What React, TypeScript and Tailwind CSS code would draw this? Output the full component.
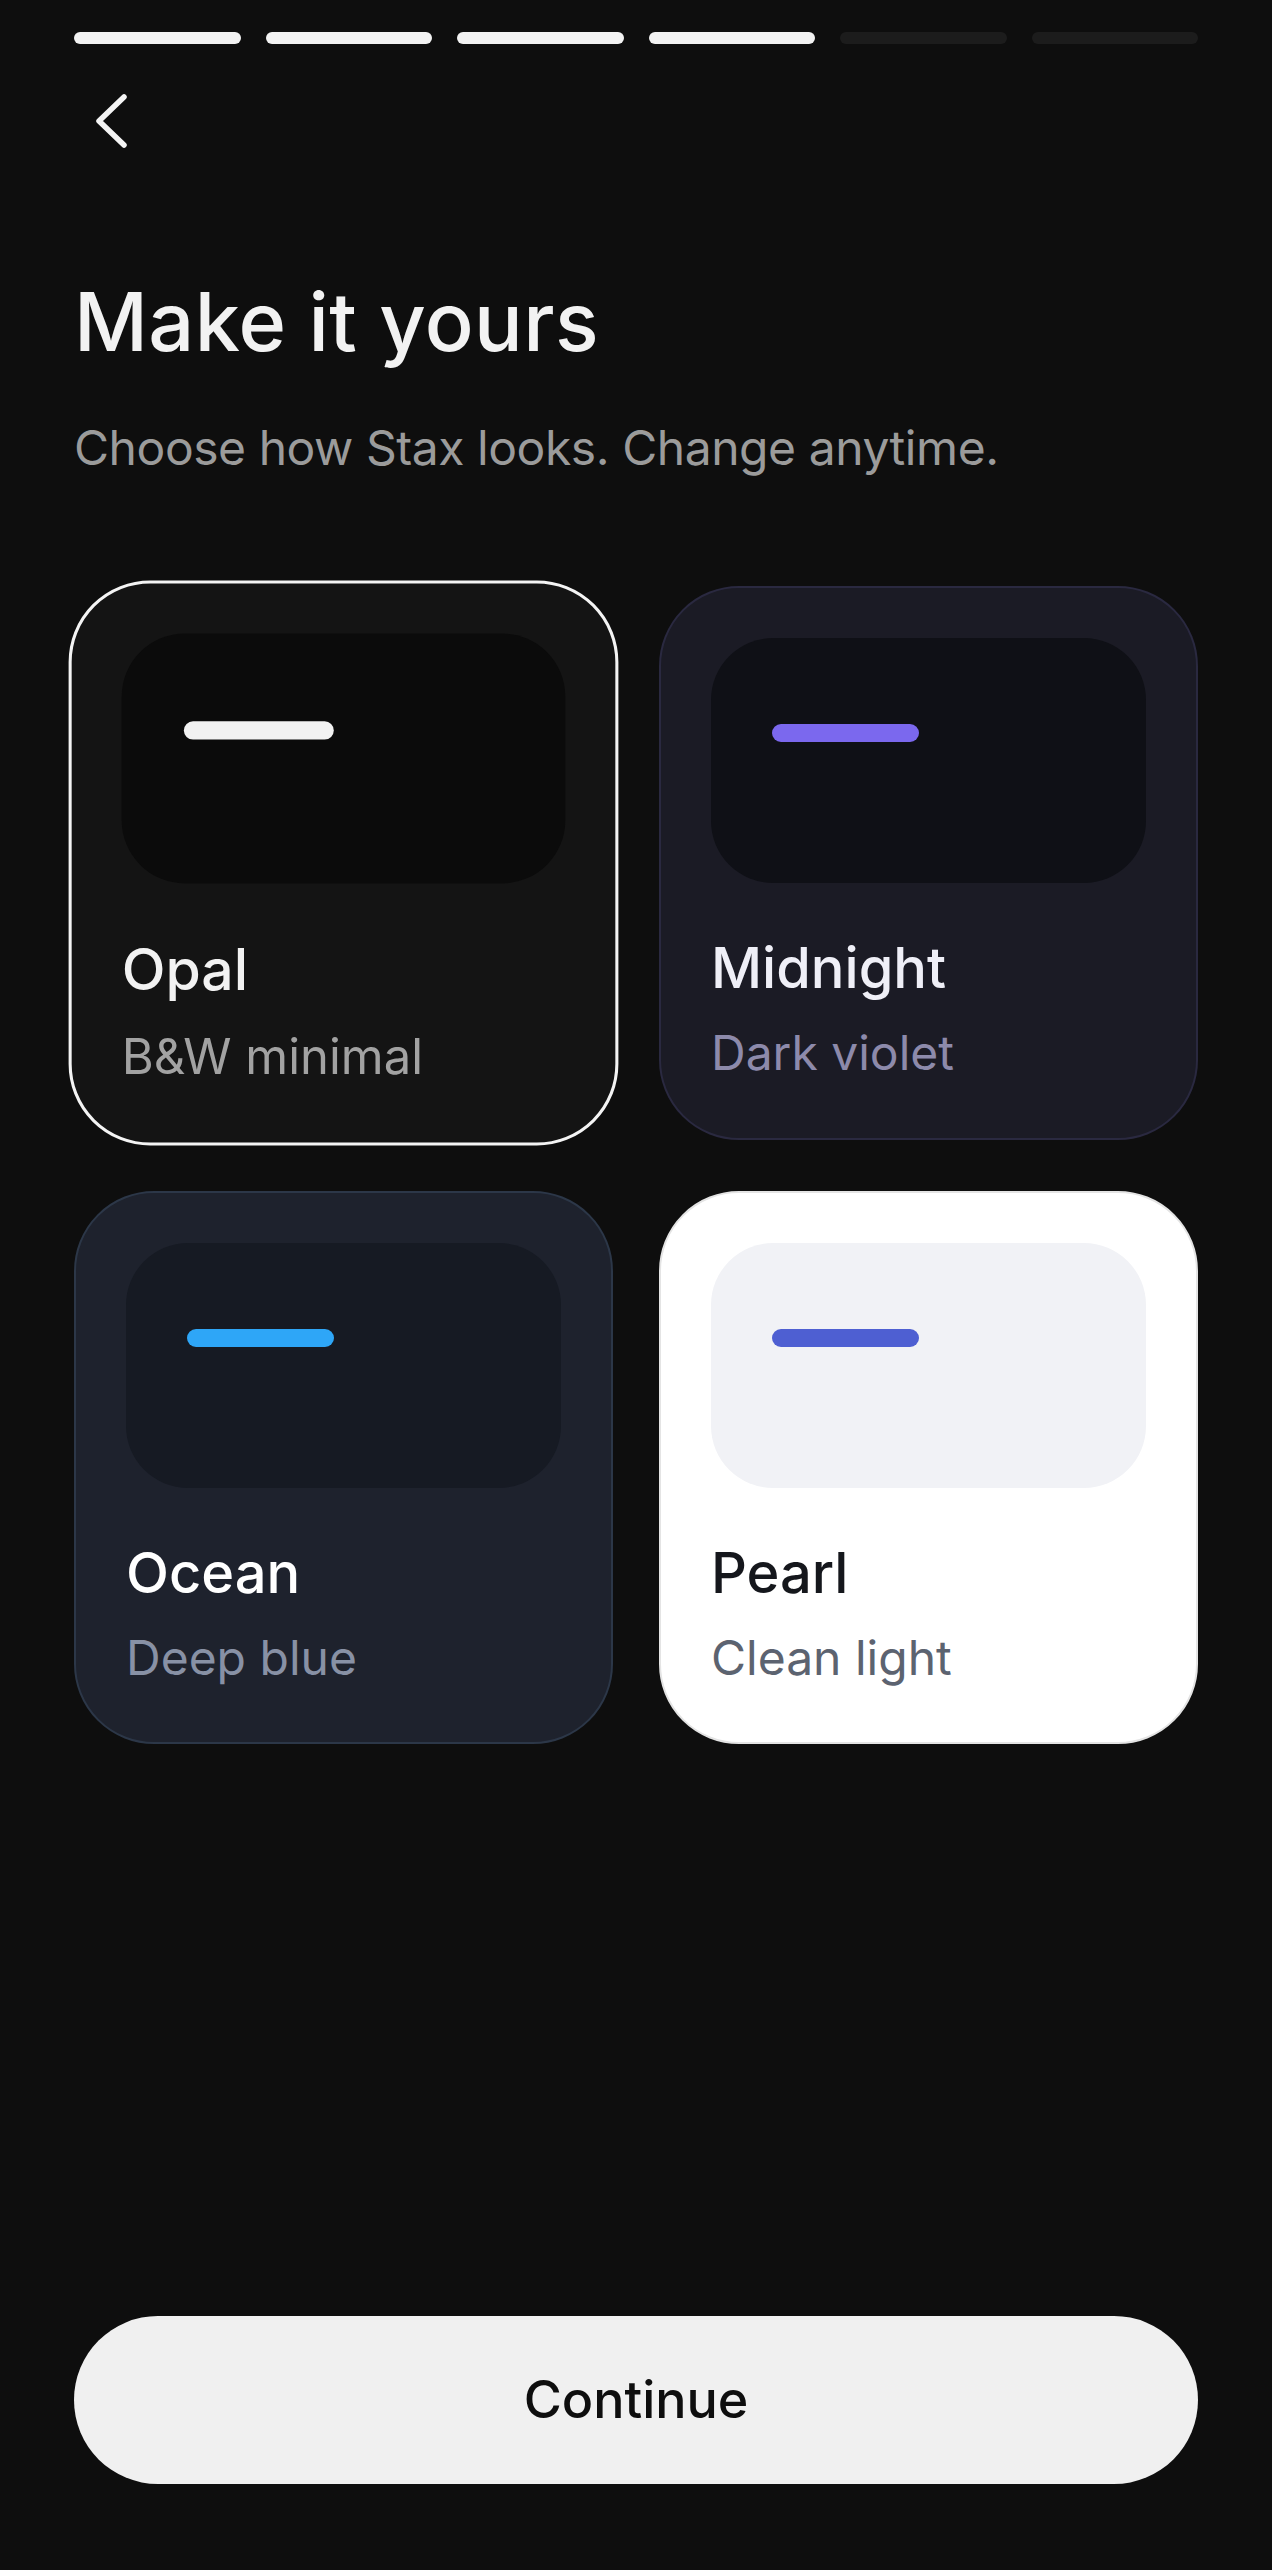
const steps = [true, true, true, true, false, false];

type Theme = {
  name: string;
  tagline: string;
  card: string;
  preview: string;
  bar: string;
  title: string;
  sub: string;
};

const themes: Theme[] = [
  {
    name: "Opal",
    tagline: "B&W minimal",
    card: "scale-[1.02] border-[3px] border-[#f4f4f4] bg-[#141414] p-[49px]",
    preview: "bg-[#0b0b0b]",
    bar: "bg-[#f2f2f2]",
    title: "text-[#f2f2f2]",
    sub: "text-[#a2a2a2]",
  },
  {
    name: "Midnight",
    tagline: "Dark violet",
    card: "border-2 border-[#2a2940] bg-[#1b1b25] p-[50px]",
    preview: "bg-[#0f1016]",
    bar: "bg-[#7b68ee]",
    title: "text-[#efeff7]",
    sub: "text-[#8d8aab]",
  },
  {
    name: "Ocean",
    tagline: "Deep blue",
    card: "border-2 border-[#2c3748] bg-[#1e222d] p-[50px]",
    preview: "bg-[#161a23]",
    bar: "bg-[#2ea6f7]",
    title: "text-[#ffffff]",
    sub: "text-[#8891a5]",
  },
  {
    name: "Pearl",
    tagline: "Clean light",
    card: "border-2 border-[#e4e4e4] bg-white p-[50px]",
    preview: "bg-[#f1f2f6]",
    bar: "bg-[#4e5fd2]",
    title: "text-[#15171c]",
    sub: "text-[#5c6370]",
  },
];

function ThemeCard({ t }: { t: Theme }) {
  return (
    <button className={`flex flex-col rounded-[80px] pb-[60px] text-left ${t.card}`}>
      <div className={`h-[245px] w-full rounded-[62px] pl-[61px] pt-[86px] ${t.preview}`}>
        <div className={`h-[18px] w-[147px] rounded-full ${t.bar}`} />
      </div>
      <p className={`mt-[57px] text-[56px] font-medium leading-none ${t.title}`}>{t.name}</p>
      <p className={`mt-[33px] text-[48px] leading-none ${t.sub}`}>{t.tagline}</p>
    </button>
  );
}

export default function App() {
  return (
    <div
      className="flex min-h-screen flex-col bg-[#0e0e0e] px-[74px] pb-[86px] pt-[32px]"
      style={{ fontFamily: "Inter, 'Noto Sans', sans-serif" }}
    >
      <div className="flex gap-[25px]">
        {steps.map((done, i) => (
          <div
            key={i}
            className={`h-[12px] flex-1 rounded-full ${done ? "bg-[#f2f2f2]" : "bg-[#1c1c1c]"}`}
          />
        ))}
      </div>

      <button className="ml-[20px] mt-[48px] self-start">
        <svg width="36" height="58" viewBox="0 0 36 58" fill="none">
          <path
            d="M30 5 L5 29 L30 53"
            stroke="#f4f4f4"
            strokeWidth="5.5"
            strokeLinecap="round"
            strokeLinejoin="round"
          />
        </svg>
      </button>

      <h1 className="mt-[132px] text-[81px] font-medium leading-none tracking-[0.4px] text-[#f2f2f2]">
        Make it yours
      </h1>
      <p className="mt-[61px] text-[48px] leading-none tracking-[-0.45px] text-[#9b9b9b]">
        Choose how Stax looks. Change anytime.
      </p>

      <div className="mt-[114px] grid grid-cols-2 gap-x-[46px] gap-y-[51px]">
        {themes.map((t) => (
          <ThemeCard key={t.name} t={t} />
        ))}
      </div>

      <div className="flex-1" />

      <button className="h-[168px] w-full rounded-full bg-[#f0f0f0] text-[52px] font-medium text-[#0e0e0e]">
        Continue
      </button>
    </div>
  );
}
